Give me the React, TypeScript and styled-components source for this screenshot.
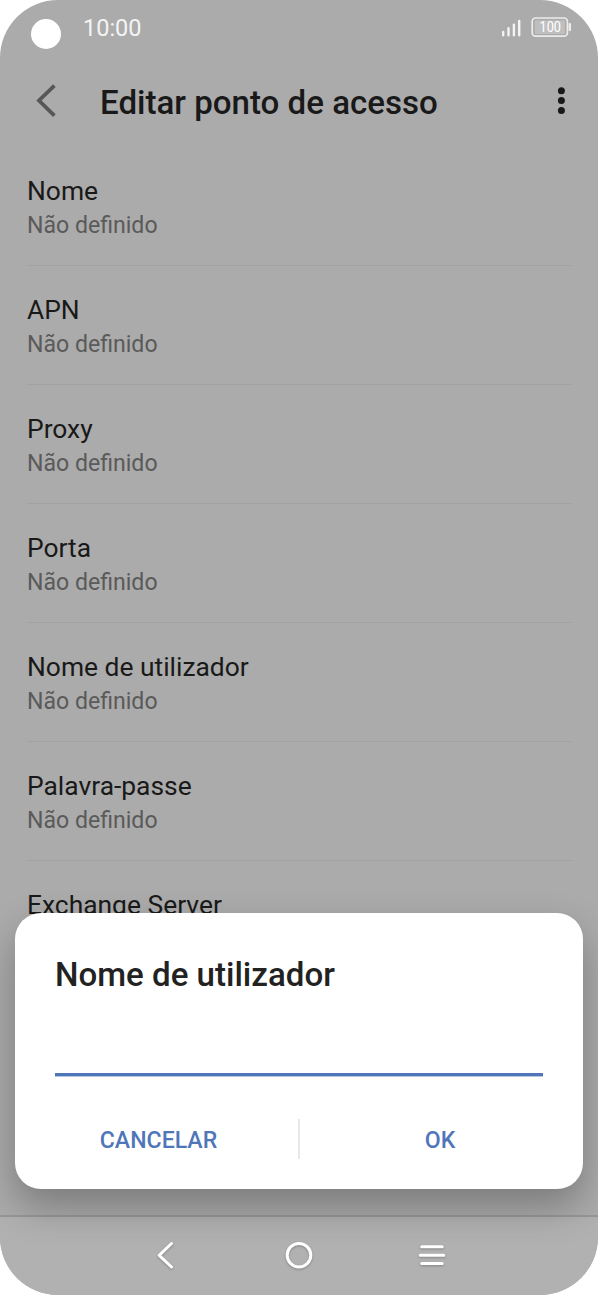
import React from "react";
import styled, { createGlobalStyle } from "styled-components";

const GlobalStyle = createGlobalStyle`
  * { box-sizing: border-box; }
  html, body { margin: 0; padding: 0; background: #fff; }
  body { font-family: Roboto, "Liberation Sans", sans-serif; overflow: hidden; }
  button { font: inherit; border: 0; background: none; padding: 0; margin: 0; }
`;

const Phone = styled.div`
  position: relative;
  width: 598px;
  height: 1295px;
  border-radius: 58px;
  overflow: hidden;
  background: #ababab;
  display: flex;
  flex-direction: column;
`;

const StatusBar = styled.div`
  height: 60px;
  flex: none;
  padding: 0 26px 0 31px;
  display: flex;
  align-items: flex-start;
`;

const Camera = styled.div`
  width: 30px;
  height: 30px;
  margin-top: 19px;
  border-radius: 50%;
  background: #fff;
`;

const Clock = styled.div`
  margin: 13px auto 0 22px;
  font-size: 23.5px;
  line-height: 30px;
  color: #f4f4f4;
`;

const StatusIcons = styled.svg`
  display: block;
  margin-top: 14px;
`;

const Header = styled.header`
  height: 87px;
  flex: none;
  display: flex;
  align-items: flex-start;
  padding: 21px 30px 0 34px;
`;

const HeaderTitle = styled.h1`
  margin: 1px auto 0 41px;
  font-size: 33.1px;
  line-height: 42px;
  font-weight: 500;
  color: #191919;
`;

const IconButton = styled.button`
  height: 40px;
  display: flex;
  align-items: center;
  justify-content: center;
`;

const List = styled.div`
  flex: 1;
  min-height: 0;
  overflow: hidden;
  padding: 0 26px 0 27px;
`;

const Row = styled.div`
  height: 119px;
  padding-top: 27px;
  border-bottom: 1px solid #a2a2a2;
`;

const RowTitle = styled.div`
  font-size: 26.4px;
  line-height: 34px;
  color: #191919;
`;

const RowValue = styled.div`
  margin-top: 1px;
  font-size: 23.1px;
  line-height: 34px;
  color: #5a5a5a;
`;

const NavBar = styled.nav`
  position: relative;
  z-index: 0;
  height: 80px;
  flex: none;
  border-top: 2px solid #979797;
  background: #b1b1b1;
`;

const NavIcons = styled.svg`
  position: absolute;
  z-index: 2;
  left: 0;
  bottom: 0;
  display: block;
  filter: drop-shadow(0 1px 1px rgba(0, 0, 0, 0.25));
`;

const Dialog = styled.section`
  position: absolute;
  z-index: 1;
  left: 15px;
  right: 15px;
  top: 913px;
  height: 276px;
  border-radius: 26px;
  background: #fff;
  padding: 41px 40px 0;
  box-shadow: 0 18px 38px rgba(0, 0, 0, 0.28);
  display: flex;
  flex-direction: column;
`;

const DialogTitle = styled.h2`
  margin: 0;
  font-size: 33.1px;
  line-height: 42px;
  font-weight: 500;
  color: #222;
`;

const Field = styled.div`
  height: 80px;
  border-bottom: 3px solid #5076ba;
  box-shadow: 0 1px 0 #b4c4e1;
`;

const Actions = styled.div`
  margin: 43px -40px 0;
  height: 40px;
  display: grid;
  grid-template-columns: 1fr 2px 1fr;
`;

const Divider = styled.div`
  background: #e8e8e8;
`;

const Action = styled.button<{ $shift: number }>`
  && {
    height: 40px;
    font-size: 23.1px;
    font-weight: 500;
    line-height: 37px;
    padding-top: 3px;
    color: #5076ba;
    padding-left: ${(p) => Math.max(p.$shift, 0)}px;
    padding-right: ${(p) => Math.max(-p.$shift, 0)}px;
  }
`;

const settings = ["Nome", "APN", "Proxy", "Porta", "Nome de utilizador", "Palavra-passe", "Exchange Server"];

export default function App() {
  return (
    <>
      <GlobalStyle />
      <Phone>
        <StatusBar>
          <Camera />
          <Clock>10:00</Clock>
          <StatusIcons width="72" height="26" viewBox="500 14 72 26">
            <g stroke="#f4f4f4" strokeWidth="2.4" strokeLinecap="round">
              <path d="M503.2 32V35.3M508.5 28.2V35.3M513.9 24.6V35.3M519.2 21V35.3" />
            </g>
            <rect x="532.2" y="18" width="35.2" height="18.2" rx="3.4" fill="none" stroke="#ececec" strokeWidth="1.7" />
            <rect x="534.8" y="20.2" width="30.2" height="13.8" rx="1.2" fill="#bfbfbf" />
            <rect x="568.6" y="23" width="2.4" height="8" rx="1" fill="#ececec" />
            <text x="550.3" y="32" fontSize="14" textLength="21.4" lengthAdjust="spacingAndGlyphs" textAnchor="middle" fill="#fff">100</text>
          </StatusIcons>
        </StatusBar>
        <Header>
          <IconButton aria-label="Voltar">
            <svg width="25" height="40" viewBox="34 81 25 40">
              <path d="M54.4 85.7L39 100.5L54.4 115.6" fill="none" stroke="#575757" strokeWidth="3.8" />
            </svg>
          </IconButton>
          <HeaderTitle>Editar ponto de acesso</HeaderTitle>
          <IconButton aria-label="Mais">
            <svg width="14" height="40" viewBox="554 81 14 40" fill="#191919">
              <circle cx="561.4" cy="90.8" r="3.5" />
              <circle cx="561.4" cy="100.6" r="3.5" />
              <circle cx="561.4" cy="110.5" r="3.5" />
            </svg>
          </IconButton>
        </Header>
        <List>
          {settings.map((name) => (
            <Row key={name}>
              <RowTitle>{name}</RowTitle>
              <RowValue>Não definido</RowValue>
            </Row>
          ))}
        </List>
        <NavBar />
        <Dialog role="dialog">
          <DialogTitle>Nome de utilizador</DialogTitle>
          <Field />
          <Actions>
            <Action $shift={4}>CANCELAR</Action>
            <Divider />
            <Action $shift={-3}>OK</Action>
          </Actions>
        </Dialog>
        <NavIcons width="598" height="78" viewBox="0 1217 598 78" fill="none" stroke="#fff" strokeWidth="3" strokeLinecap="round" strokeLinejoin="round">
          <path d="M171.5 1243.5L159.2 1255.3L171.5 1267" />
          <circle cx="299" cy="1255.2" r="11.8" />
          <path d="M421.7 1246.8H442.2M420.2 1255.2H443.8M421.7 1263.4H442.2" />
        </NavIcons>
      </Phone>
    </>
  );
}
